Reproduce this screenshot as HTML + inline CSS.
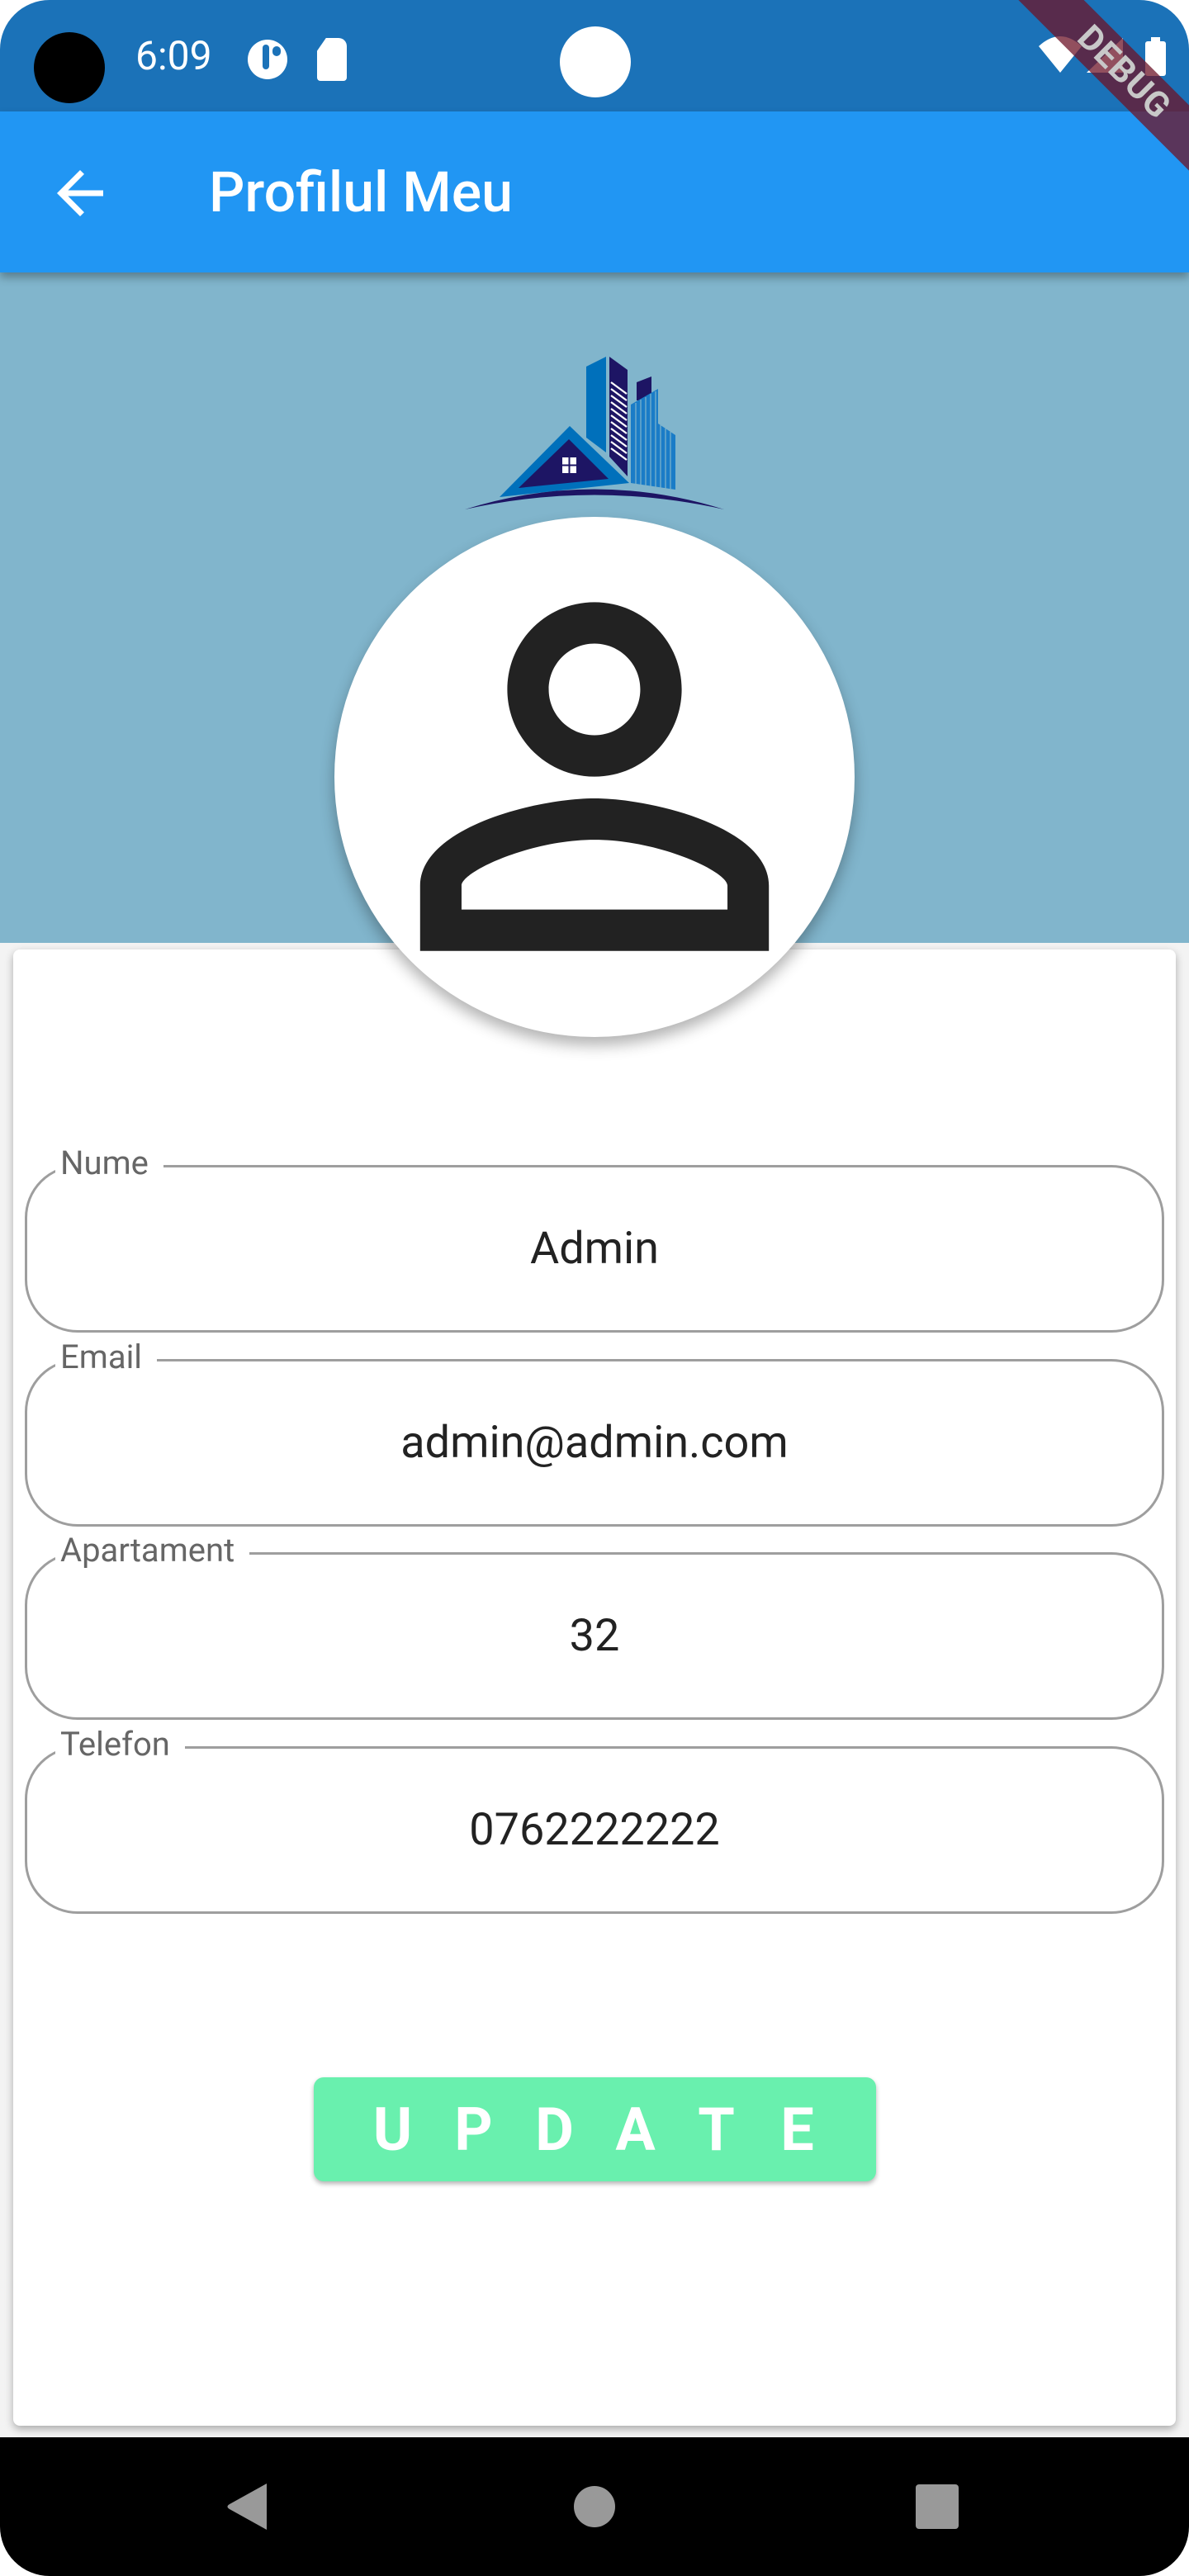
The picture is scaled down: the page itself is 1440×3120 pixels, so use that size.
<!DOCTYPE html>
<html><head><meta charset="utf-8"><style>
html,body{margin:0;padding:0;}
body{width:1440px;height:3120px;position:relative;overflow:hidden;background:#fff;font-family:"Roboto","Liberation Sans",sans-serif;}
.screen{position:absolute;left:0;top:0;width:1440px;height:3120px;background:#f3f3f3;border-radius:60px 60px 60px 60px;overflow:hidden;}
.status{position:absolute;left:0;top:0;width:1440px;height:135px;background:#1b72b8;}
.appbar{position:absolute;left:0;top:135px;width:1440px;height:195px;background:#2196f3;box-shadow:0 6px 10px rgba(0,0,0,.3);z-index:3;}
.header{position:absolute;left:0;top:330px;width:1440px;height:812px;background:#81b5cc;}
.card{position:absolute;left:16px;top:1150px;width:1408px;height:1788px;background:#fff;border-radius:8px;box-shadow:0 4px 10px rgba(0,0,0,.3);}
.field{position:absolute;left:30px;width:1380px;height:203px;border:3px solid #9e9e9e;border-radius:64px;box-sizing:border-box;}
.lbl{position:absolute;left:34px;top:-31px;background:#fff;padding:0 18px 0 6px;color:#666;font-size:40px;line-height:52px;}
.val{position:absolute;left:0;right:0;top:0;bottom:0;display:flex;align-items:center;justify-content:center;font-size:54px;color:#222;}
.btn{position:absolute;left:380px;top:2516px;width:681px;height:126px;background:#69f0ae;border-radius:12px;box-shadow:0 3px 6px rgba(0,0,0,.3);color:#fff;font-weight:bold;font-size:72px;display:flex;align-items:center;justify-content:center;}
.btn span{display:inline-block;width:98px;text-align:center;}
.nav{position:absolute;left:0;top:2952px;width:1440px;height:168px;background:#000;}
</style></head><body>
<div class="screen">
<div class="status">
  <div style="position:absolute;left:41px;top:39px;width:86px;height:86px;border-radius:50%;background:#000"></div>
  <div style="position:absolute;left:164px;top:36px;font-size:48px;color:#fff;line-height:64px">6:09</div>
  <div style="position:absolute;left:300px;top:48px;width:48px;height:48px;border-radius:50%;background:#fff"></div>
  <div style="position:absolute;left:318px;top:54px;width:8px;height:30px;background:#1b72b8;border-radius:4px"></div>
  <div style="position:absolute;left:330px;top:56px;width:10px;height:12px;background:#1b72b8;border-radius:5px"></div>
  <div style="position:absolute;left:384px;top:46px;width:36px;height:52px;background:#fff;border-radius:4px 10px 4px 4px;clip-path:polygon(30% 0,100% 0,100% 100%,0 100%,0 30%)"></div>
  <div style="position:absolute;left:678px;top:32px;width:86px;height:86px;border-radius:50%;background:#fff"></div>
  <svg style="position:absolute;left:1250px;top:36px" width="190" height="70" viewBox="0 0 190 70">
    <path d="M8 20 Q34 -4 60 20 L34 52 Z" fill="#fff"/>
    <path d="M66 52 L110 52 L110 10 Z" fill="#fff"/>
    <rect x="137" y="14" width="25" height="42" rx="3" fill="#fff"/>
    <rect x="144" y="9" width="11" height="6" fill="#fff"/>
  </svg>
</div>
<div class="appbar">
  <svg style="position:absolute;left:55px;top:57px" width="84" height="84" viewBox="0 0 24 24"><path d="M20 11H7.83l5.59-5.59L12 4l-8 8 8 8 1.41-1.41L7.83 13H20v-2z" fill="#fff"/></svg>
  <div style="position:absolute;left:253px;top:58px;font-size:68px;color:#fff;font-weight:500;line-height:80px">Profilul Meu</div>
</div>
<div class="header">
  <svg style="position:absolute;left:540px;top:90px" width="360" height="210" viewBox="540 420 360 210">
    <polygon points="710,444 734,432 734,548 710,530" fill="#0070bb"/>
    <polygon points="738,432 760,448 760,577 738,553" fill="#1d1564"/>
    <g stroke="#fff" stroke-width="2.2">
      <line x1="740" y1="463" x2="759" y2="477"/><line x1="740" y1="471" x2="759" y2="485"/><line x1="740" y1="479" x2="759" y2="493"/><line x1="740" y1="487" x2="759" y2="501"/><line x1="740" y1="495" x2="759" y2="509"/><line x1="740" y1="503" x2="759" y2="517"/><line x1="740" y1="511" x2="759" y2="525"/><line x1="740" y1="519" x2="759" y2="533"/><line x1="740" y1="527" x2="759" y2="541"/><line x1="740" y1="535" x2="759" y2="549"/><line x1="740" y1="543" x2="759" y2="557"/>
    </g>
    <polygon points="771,463 789,456 789,485 771,485" fill="#1d1564"/>
    <polygon points="764,490 797,471 797,513 818,527 818,593 764,585" fill="#1a7cc7"/>
    <g stroke="#81b5cc" stroke-width="1.2"><line x1="770" y1="488" x2="770" y2="590"/><line x1="776" y1="484" x2="776" y2="590"/><line x1="782" y1="481" x2="782" y2="590"/><line x1="788" y1="477" x2="788" y2="590"/><line x1="794" y1="474" x2="794" y2="590"/><line x1="800" y1="515" x2="800" y2="592"/><line x1="806" y1="519" x2="806" y2="592"/><line x1="812" y1="523" x2="812" y2="592"/></g>
    <polygon points="690,516 605,602 762,585" fill="#0070bb"/>
    <polygon points="689,532 628,591 737,580" fill="#1d1564"/>
    <rect x="681" y="554" width="7.5" height="8.5" fill="#fff"/><rect x="690.5" y="554" width="7.5" height="8.5" fill="#fff"/>
    <rect x="681" y="564.5" width="7.5" height="8.5" fill="#fff"/><rect x="690.5" y="564.5" width="7.5" height="8.5" fill="#fff"/>
    <path d="M563 617 Q720 568 877 617 Q720 582 563 617 Z" fill="#1d1564"/>
  </svg>
</div>
<div class="card">
</div>
<div style="position:absolute;left:405px;top:626px;width:630px;height:630px;border-radius:50%;background:#fff;box-shadow:0 10px 18px rgba(0,0,0,.3);z-index:2"></div>
<svg style="position:absolute;left:0;top:0;z-index:2" width="1440" height="1300">
  <path transform="translate(403.2,623.8) scale(26.4)" fill="#222" d="M12 5.9c1.16 0 2.1.94 2.1 2.1s-.94 2.1-2.1 2.1S9.9 9.160 9.9 8s.94-2.1 2.1-2.1m0 9c2.97 0 6.1 1.46 6.1 2.1v1.1H5.9V17c0-.64 3.13-2.1 6.1-2.1M12 4C9.79 4 8 5.79 8 8s1.79 4 4 4 4-1.79 4-4-1.790-4-4-4zm0 9c-2.67 0-8 1.34-8 4v3h16v-3c0-2.66-5.33-4-8-4z"/>
</svg>
<div class="field" style="top:1411px"><div class="lbl">Nume</div><div class="val">Admin</div></div>
<div class="field" style="top:1646px"><div class="lbl">Email</div><div class="val">admin@admin.com</div></div>
<div class="field" style="top:1880px"><div class="lbl">Apartament</div><div class="val">32</div></div>
<div class="field" style="top:2115px"><div class="lbl">Telefon</div><div class="val">0762222222</div></div>
<div class="btn"><span>U</span><span>P</span><span>D</span><span>A</span><span>T</span><span>E</span></div>
<div class="nav">
  <svg width="1440" height="168">
    <path d="M323 56 L323 112 L278 87 Q273 84 278 81 Z" fill="#999"/>
    <circle cx="720" cy="84" r="25" fill="#999"/>
    <rect x="1109" y="57" width="52" height="54" rx="4" fill="#999"/>
  </svg>
</div>
<div style="position:absolute;left:1161px;top:60px;width:400px;height:56px;background:rgba(110,20,40,.75);transform:rotate(45deg);transform-origin:center;color:#c8c8c8;font-weight:bold;font-size:42px;text-align:center;line-height:56px;letter-spacing:1px;z-index:5">DEBUG</div>
</div>
</body></html>
